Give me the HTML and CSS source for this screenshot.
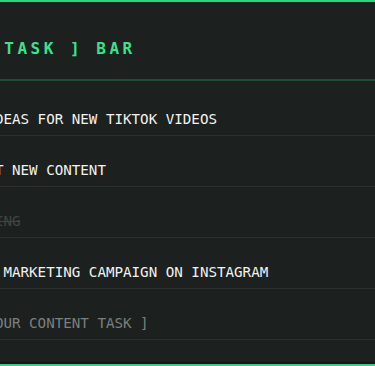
FILE: index.html
```html
<!DOCTYPE html>
<html lang="en">
<head>
    <meta charset="UTF-8">
    <meta name="viewport" content="width=device-width, initial-scale=1.0">
    <title>Task Bar</title>
    <link rel="stylesheet" href="styles.css">
</head>
<body>
    <div class="app">
        <!-- Header -->
        <header class="app-header">
            <h1 class="title">[ CONTENT TASK ] BAR</h1>
        </header>

        <!-- Task list -->
        <ul class="task-list">
            <li class="task">
                <span class="check"></span>
                <span class="task-text">BRAINSTORM IDEAS FOR NEW TIKTOK VIDEOS</span>
            </li>
            <li class="task">
                <span class="check"></span>
                <span class="task-text">EDIT AND POST NEW CONTENT</span>
            </li>
            <li class="task done">
                <span class="check"></span>
                <span class="task-text">UPDATE BRANDING</span>
            </li>
            <li class="task">
                <span class="check"></span>
                <span class="task-text">LAUNCH A NEW MARKETING CAMPAIGN ON INSTAGRAM</span>
            </li>
            <li class="task task-input">
                <span class="check"></span>
                <input type="text" class="new-task" placeholder="[ QUEUE UP YOUR CONTENT TASK ]">
            </li>
        </ul>

        <div class="app-foot"></div>
    </div>
</body>
</html>
```

FILE: styles.css
```css
:root {
    --green: #2bd67f;
    --green-text: #3de28c;
    --green-dim: #1f4d38;
    --bg: #1c2120;
    --line: #2a302e;
    --text: #f2f2ee;
    --text-done: #3f4543;
    --text-muted: #7a807d;
    --mono: 'DejaVu Sans Mono', 'Liberation Mono', monospace;
}

* {
    margin: 0;
    padding: 0;
    box-sizing: border-box;
}

body {
    background: var(--bg);
    font-family: var(--mono);
    height: 366px;
    overflow: hidden;
}

.app {
    width: 640px;
    margin-left: -141px;
    background: var(--bg);
    border-top: 2px solid var(--green);
    border-bottom: 4px solid var(--green);
}

/* Header */
.app-header {
    padding: 36px 14px 19px;
    border-bottom: 2px solid var(--green-dim);
}

.title {
    font-size: 16px;
    line-height: 22px;
    font-weight: 700;
    letter-spacing: 3.5px;
    color: var(--green-text);
    white-space: nowrap;
}

/* Tasks */
.task-list {
    list-style: none;
    padding: 4px 0 22px;
}

.task {
    display: flex;
    align-items: center;
    gap: 5.4px;
    padding: 24px 14px 6px;
    border-bottom: 1px solid var(--line);
    font-size: 14.2px;
    line-height: 20px;
    color: var(--text);
    white-space: nowrap;
}

.check {
    width: 14px;
    height: 14px;
    flex-shrink: 0;
    border: 1px solid var(--green);
    border-radius: 2px;
}

.task.done .task-text {
    color: var(--text-done);
    text-decoration: line-through;
}

.task.done .check {
    background: var(--green);
}

.new-task {
    flex: 1;
    background: transparent;
    border: none;
    outline: none;
    font-family: var(--mono);
    font-size: 14.2px;
    line-height: 20px;
    height: 20px;
    color: var(--text);
}

.new-task::placeholder {
    color: var(--text-muted);
}

.app-foot {
    height: 1.5px;
    background: #131716;
}
```
